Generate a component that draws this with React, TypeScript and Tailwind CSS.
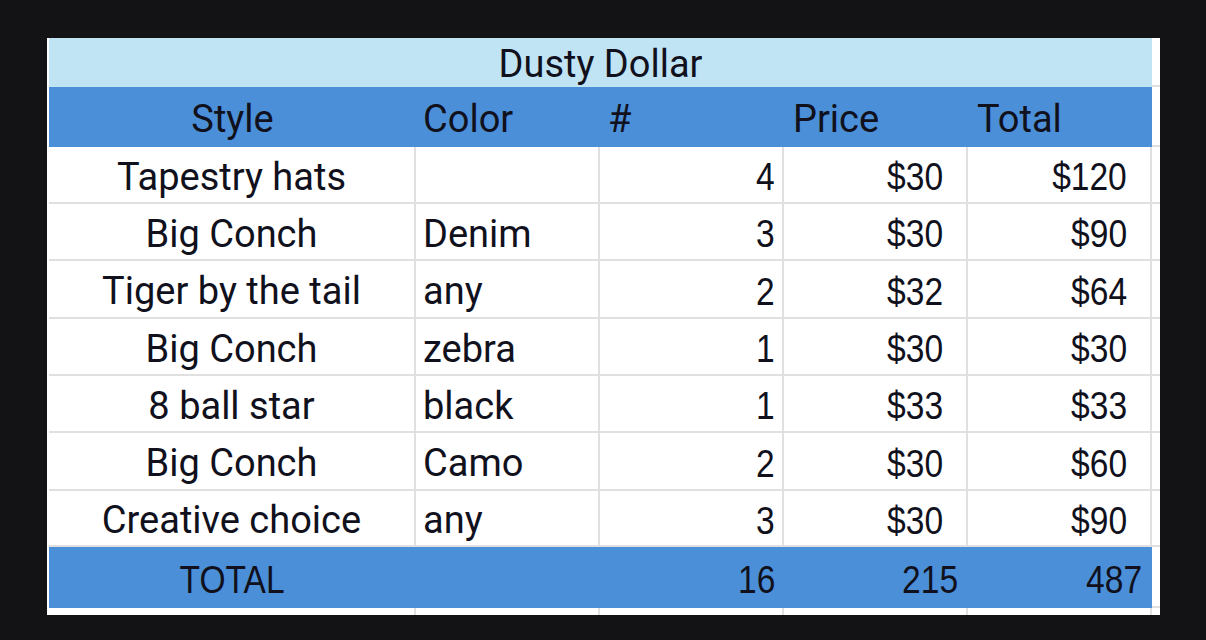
const rows = [
  { style: "Tapestry hats", color: "", qty: 4, price: "$30", total: "$120", h: "h-[57px]" },
  { style: "Big Conch", color: "Denim", qty: 3, price: "$30", total: "$90", h: "h-[57px]" },
  { style: "Tiger by the tail", color: "any", qty: 2, price: "$32", total: "$64", h: "h-[58px]" },
  { style: "Big Conch", color: "zebra", qty: 1, price: "$30", total: "$30", h: "h-[57px]" },
  { style: "8 ball star", color: "black", qty: 1, price: "$33", total: "$33", h: "h-[57px]" },
  { style: "Big Conch", color: "Camo", qty: 2, price: "$30", total: "$60", h: "h-[58px]" },
  { style: "Creative choice", color: "any", qty: 3, price: "$30", total: "$90", h: "h-[56px]" },
];

const text = "font-['Roboto',sans-serif] text-[38px] leading-none";
const num = "font-['Liberation_Sans',Arial,sans-serif] text-[39px] leading-none";
const cell = "border-r-2 border-b-2 border-[#e0e0e0] flex items-center pt-[4px]";

function Num({ children, center }: { children: React.ReactNode; center?: boolean }) {
  return (
    <span className={`${num} inline-block scale-x-[0.86] ${center ? "origin-center" : "origin-right"}`}>
      {children}
    </span>
  );
}

export default function App() {
  return (
    <div className="min-h-screen w-full bg-[#131316] pt-[38px] pl-[47px]">
      <div className="w-[1113px] bg-white pl-[2px] text-[#10111c]">
        <div className="grid grid-cols-[367px_184px_184px_184px_184px_8px]">
          {/* title */}
          <div className={`col-span-5 h-[49px] bg-[#c1e4f5] flex items-center justify-center pt-[2px] ${text}`}>
            Dusty Dollar
          </div>
          <div className="h-[49px] border-b-2 border-[#e0e0e0]" />

          {/* header */}
          <div className={`h-[60px] bg-[#4b8fd8] flex items-center justify-center pt-[4px] ${text}`}>Style</div>
          <div className={`h-[60px] bg-[#4b8fd8] flex items-center pl-[7px] pt-[4px] ${text}`}>Color</div>
          <div className={`h-[60px] bg-[#4b8fd8] flex items-center pl-[8px] pt-[4px] ${text}`}>#</div>
          <div className={`h-[60px] bg-[#4b8fd8] flex items-center pl-[9px] pt-[4px] ${text}`}>Price</div>
          <div className={`h-[60px] bg-[#4b8fd8] flex items-center pl-[9px] pt-[4px] ${text}`}>Total</div>
          <div className="h-[60px] border-b-2 border-[#e0e0e0]" />

          {/* data rows */}
          {rows.map((r, i) => (
            <div key={i} className="contents">
              <div className={`${r.h} ${cell} justify-center ${text}`}>{r.style}</div>
              <div className={`${r.h} ${cell} pl-[7px] ${text}`}>{r.color}</div>
              <div className={`${r.h} ${cell} justify-end pr-[7px]`}>
                <Num>{r.qty}</Num>
              </div>
              <div className={`${r.h} ${cell} justify-end pr-[23px]`}>
                <Num>{r.price}</Num>
              </div>
              <div className={`${r.h} ${cell} justify-end pr-[23px]`}>
                <Num>{r.total}</Num>
              </div>
              <div className={`${r.h} border-b-2 border-[#e0e0e0]`} />
            </div>
          ))}

          {/* total row */}
          <div className="h-[61px] bg-[#4b8fd8] flex items-center justify-center pt-[3px]">
            <Num center>TOTAL</Num>
          </div>
          <div className="h-[61px] bg-[#4b8fd8]" />
          <div className="h-[61px] bg-[#4b8fd8] flex items-center justify-end pr-[9px] pt-[3px]">
            <Num>16</Num>
          </div>
          <div className="h-[61px] bg-[#4b8fd8] flex items-center justify-end pr-[10px] pt-[3px]">
            <Num>215</Num>
          </div>
          <div className="h-[61px] bg-[#4b8fd8] flex items-center justify-end pr-[10px] pt-[3px]">
            <Num>487</Num>
          </div>
          <div className="h-[61px] border-b-2 border-[#e0e0e0]" />

          {/* bottom strip */}
          <div className="h-[7px] border-r-2 border-[#e0e0e0]" />
          <div className="h-[7px] border-r-2 border-[#e0e0e0]" />
          <div className="h-[7px] border-r-2 border-[#e0e0e0]" />
          <div className="h-[7px] border-r-2 border-[#e0e0e0]" />
          <div className="h-[7px] border-r-2 border-[#e0e0e0]" />
          <div className="h-[7px]" />
        </div>
      </div>
    </div>
  );
}
